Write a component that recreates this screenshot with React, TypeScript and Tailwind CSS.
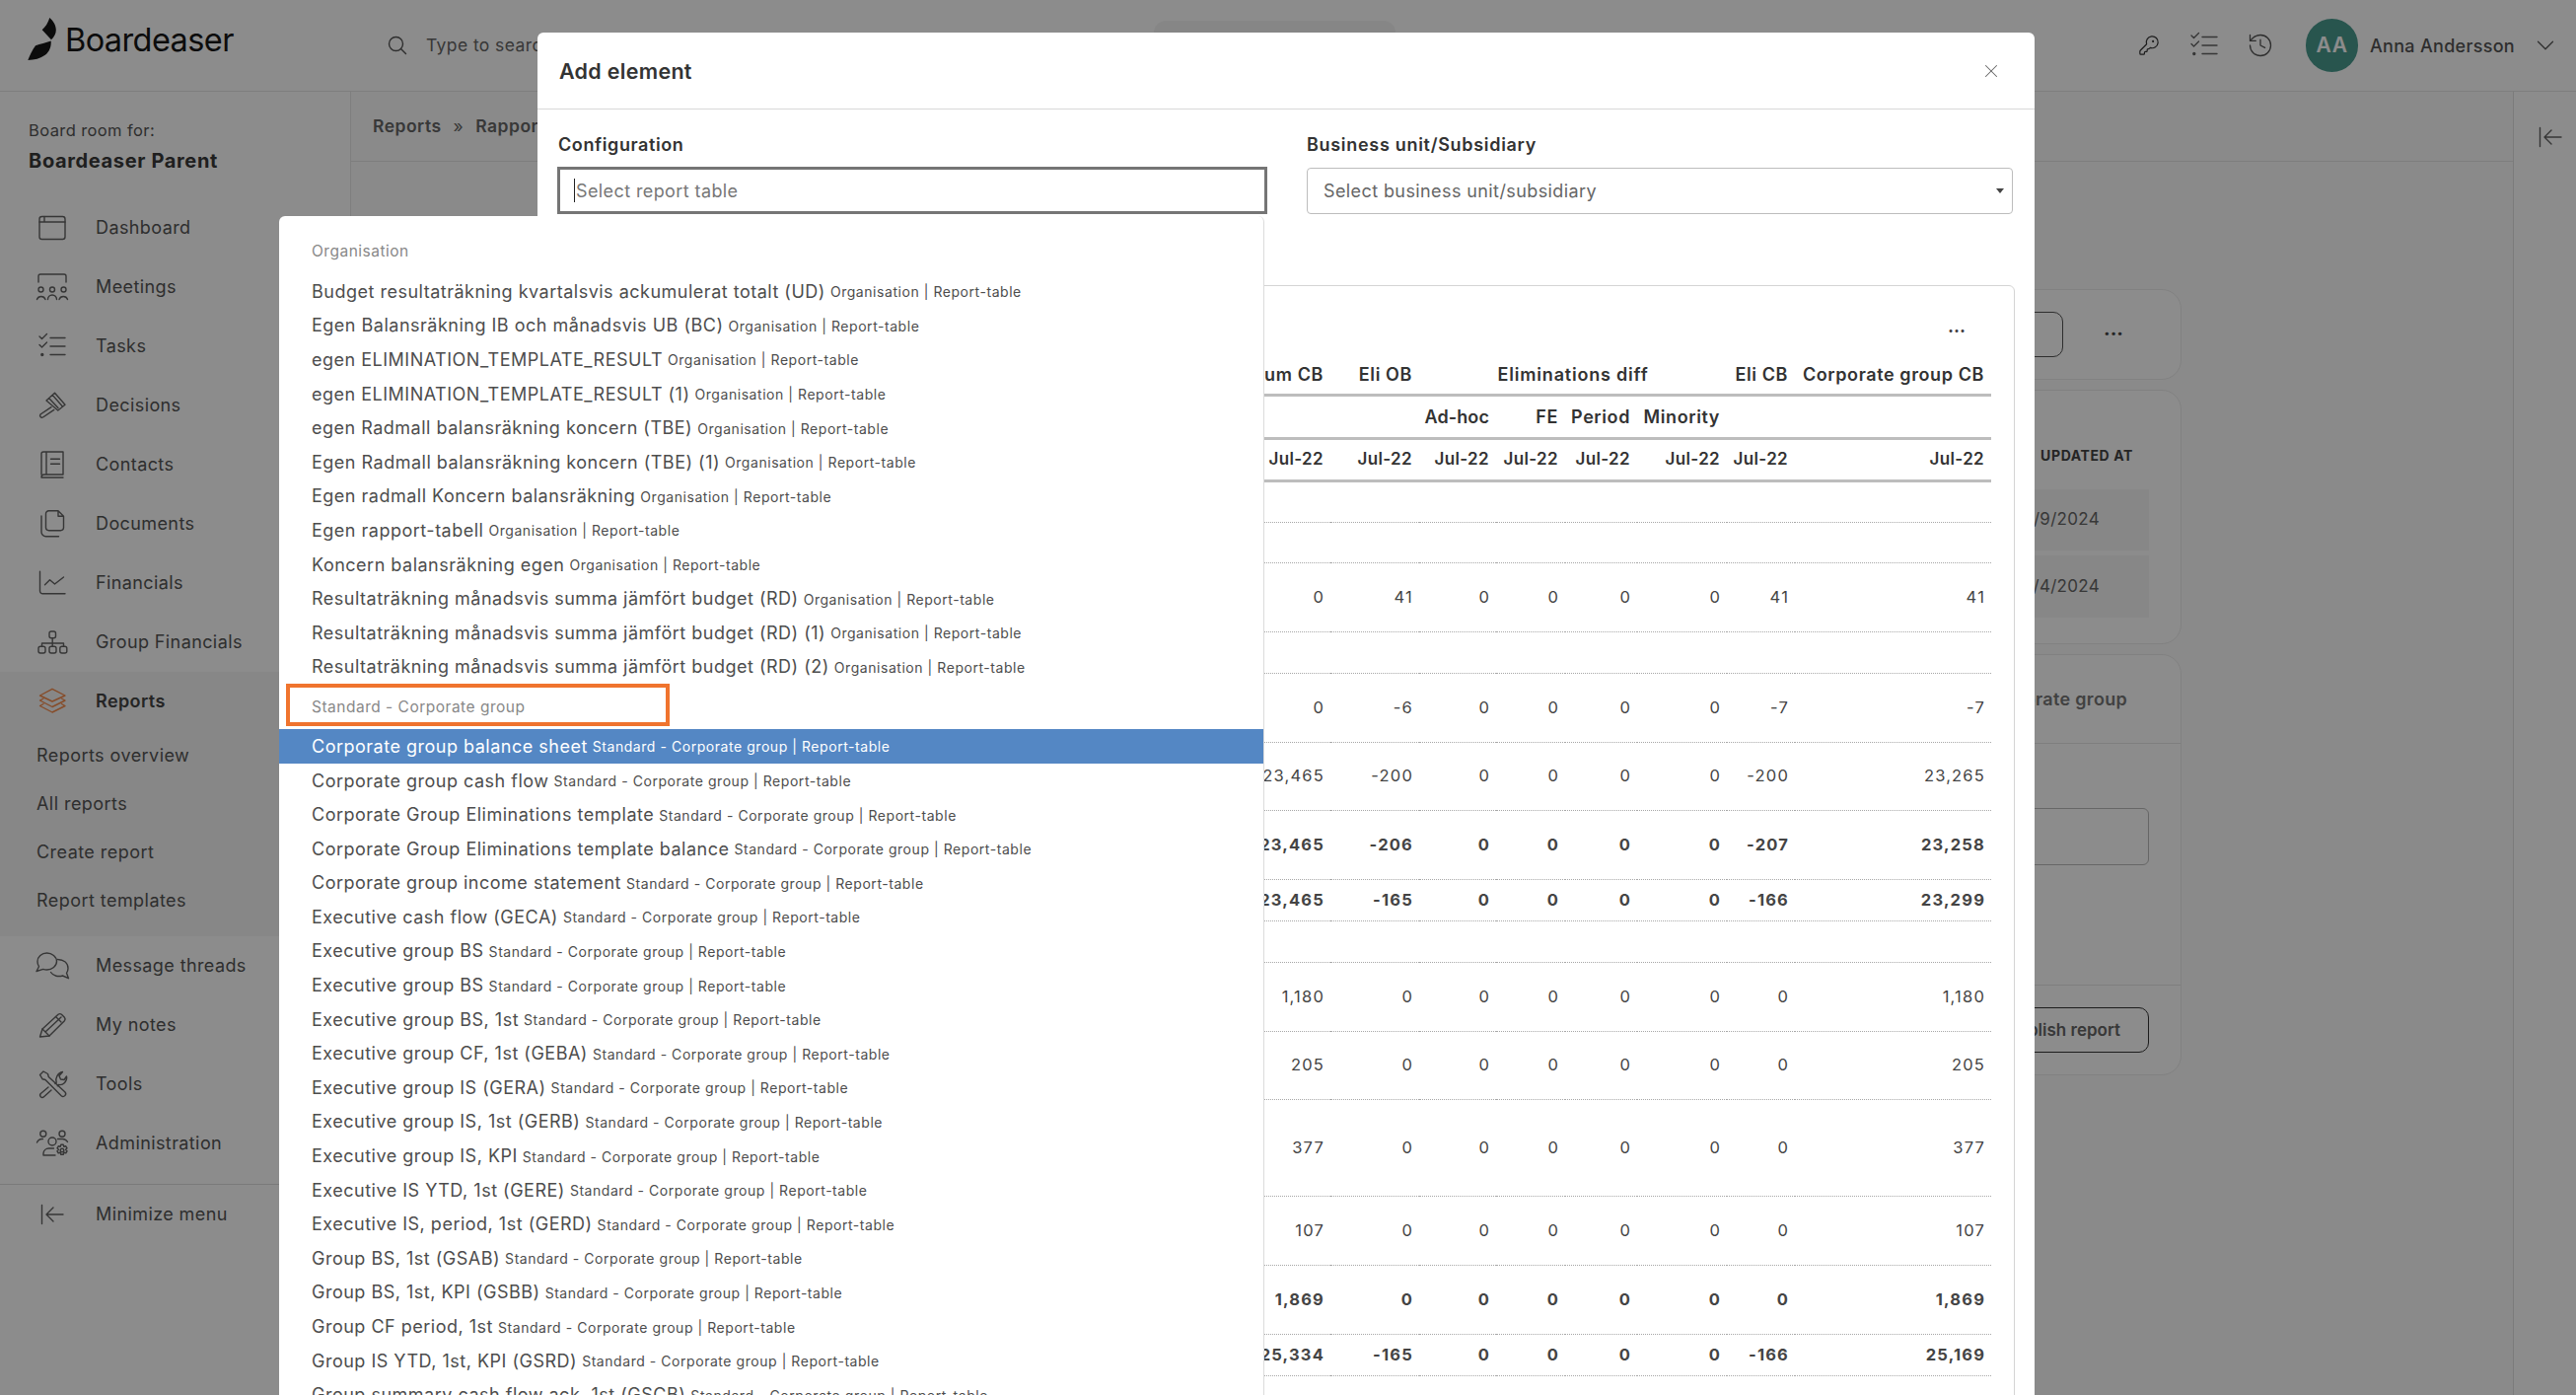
import { ChevronDown, History, KeyRound, X } from 'lucide-react';
import type { ReactNode } from 'react';

const INK = '#636363';

function Glyph({ children, color = INK }: { children: ReactNode; color?: string }) {
    return (
        <svg
            width="32"
            height="32"
            viewBox="0 0 32 32"
            fill="none"
            stroke={color}
            strokeWidth="1.4"
            strokeLinecap="round"
            strokeLinejoin="round"
            className="overflow-visible shrink-0"
        >
            {children}
        </svg>
    );
}

const icons: Record<string, ReactNode> = {
    dashboard: (
        <Glyph>
            <rect x="3" y="4.5" width="26" height="23" rx="2.5" />
            <path d="M3 10h26M8 4.5V10" />
        </Glyph>
    ),
    meetings: (
        <Glyph>
            <path d="M2 11V5a2 2 0 0 1 2-2h24a2 2 0 0 1 2 2v6" />
            <circle cx="4.5" cy="18.5" r="2.5" />
            <circle cx="16" cy="18.5" r="2.5" />
            <circle cx="27.5" cy="18.5" r="2.5" />
            <path d="M0.5 28.5a4.5 4.5 0 0 1 8.5 0M11.5 28.5a4.5 4.5 0 0 1 9 0M23 28.5a4.5 4.5 0 0 1 8.5 0" />
        </Glyph>
    ),
    tasks: (
        <Glyph>
            <path d="M3 6l2.5 2.5L10.5 3.5M3 14.5L5.5 17l5-5M14 7.5h15M14 16h15M14 24.5h15" />
            <circle cx="5.8" cy="24.5" r="1" fill={INK} />
        </Glyph>
    ),
    decisions: (
        <Glyph>
            <path d="M10 11l8.500-7.700L29 15.300 21.800 21zM12.600 8.600l9.400 10M16.200 5.400l10 11.400" />
            <path d="M15 17.700L4 25a2 2 0 0 0 2.500 3L17.800 20.400" />
        </Glyph>
    ),
    contacts: (
        <Glyph>
            <path d="M5 26V5a2 2 0 0 1 2-2h20v23H8a3 3 0 0 0-3 3h22M10 3v23M14.500 10.300h9M14.500 15.300h9" />
        </Glyph>
    ),
    documents: (
        <Glyph>
            <path d="M9.500 6a3 3 0 0 1 3-3.300H22l5.500 5.500V20a3 3 0 0 1-3 2.700h-12a3 3 0 0 1-3-2.700zM22 2.700V8.200h5.500" />
            <path d="M5 8v16a4.500 4.500 0 0 0 4.500 4.700h13" />
        </Glyph>
    ),
    financials: (
        <Glyph>
            <path d="M3.500 4.300V24a2.700 2.700 0 0 0 2.700 2.700H29M8.500 17.700l5-5 5 4.300 9-7" />
        </Glyph>
    ),
    group: (
        <Glyph>
            <rect x="13" y="5" width="6.500" height="6.700" rx="2" />
            <rect x="2" y="20.300" width="7" height="6.700" rx="2" />
            <rect x="13" y="20.300" width="7" height="6.700" rx="2" />
            <rect x="23.800" y="20.300" width="7" height="6.700" rx="2" />
            <path d="M16.200 11.700v8.600M5.500 20.300V17h22v3.300" />
        </Glyph>
    ),
    reports: (
        <Glyph color="#f58a4b">
            <path d="M16 3.300L29 10l-13 6-12.500-6z" />
            <path d="M7 13L3.500 15l12.500 6.500L29 15l-3.500-2" />
            <path d="M7 18.500l-3.500 2L16 27l13-6.500-3.500-2" />
        </Glyph>
    ),
    threads: (
        <Glyph>
            <path d="M0 21.500l2.500-4.800A8.500 8.500 0 0 1 1 11.500C1 6.800 5.300 3 10.500 3S20.500 6.800 20.500 11.500 15.800 20 10.500 20c-1.300 0-2.500-.2-3.700-.6z" />
            <path d="M21.500 9.500c5.500.2 10.500 2.800 10.500 9 0 2.200-.6 3.500-1.500 4.800l2 5.400-6-2.700c-4 1.200-9.500.5-12-3.500" />
        </Glyph>
    ),
    notes: (
        <Glyph>
            <path d="M3.500 28l2.500-8L22 5.300q1.800-1.400 3.400 0l3 3q1.400 1.700 0 3.400L13 27z" />
            <path d="M6 20l7 7M9.500 22.500L25 8M19.500 7.500l5.500 5.500" />
        </Glyph>
    ),
    tools: (
        <Glyph>
            <path d="M3.500 6.500L7 3l4.500 2.500.8 3L29 24a2.700 2.700 0 0 1-3.800 3.800L9 11.500l-3-.8z" />
            <path d="M12 19L4.300 25.500a2.300 2.300 0 0 0 3.200 3.300L15 22" />
            <path d="M19 15.500l1.200-1.300c-1.500-4.500 1.300-9.700 6.300-10.700l-3.500 4 1.500 3.500 3.500.5 2.500-3.500c1 5-3.500 9.500-8 8.500l-1.200 1.300" />
        </Glyph>
    ),
    admin: (
        <Glyph>
            <circle cx="6.800" cy="6.300" r="3" />
            <circle cx="26" cy="6.300" r="3" />
            <circle cx="16" cy="14" r="4" />
            <path d="M0.500 15a6 6 0 0 1 6-3.500M21.500 11.500h5a6 6 0 0 1 5 3M7 28v-2a5.500 5.500 0 0 1 5.500-5h5M7 28h12" />
            <circle cx="26" cy="23" r="1.800" />
            <path d="M24.800 17.300h2.400l.6 2 2-.5 1.200 2-1.400 1.500 1.400 1.500-1.200 2-2-.5-.6 2h-2.400l-.6-2-2 .5-1.200-2 1.400-1.500-1.400-1.500 1.200-2 2 .5z" />
        </Glyph>
    ),
    minimize: (
        <Glyph>
            <path d="M5.500 6.500v19M27 16H10M17 9l-7 7 7 7" />
        </Glyph>
    ),
};

function Logo() {
    return (
        <svg width="32" height="46" viewBox="25 14 32 46" fill="#161616" className="-mt-[5px] shrink-0">
            <path d="M49.300 16c3.700 3.200 6.400 7.400 6.500 12.300.1 3.600-1.800 7.300-4.800 10L41.700 28.300c3.300-3 6.200-7.300 7.600-12.300z" />
            <path d="M50.700 39.500c.4 5.400-1.300 10.800-5.900 14.300-4.800 3.600-11 5-17.500 5.200 2-5 4.300-10.200 7.700-14.700 4.600-1.800 10.500-3 15.700-4.800z" />
        </svg>
    );
}

function MenuRow({ icon, label, active }: { icon: string; label: string; active?: boolean }) {
    return (
        <div className="flex h-[60px] items-center pl-[36.500px]">
            {icons[icon]}
            <span className={`-mt-[1px] ml-[28.500px] text-[18px] tracking-[0.4px] ${active ? 'font-semibold text-[#444]' : 'text-[#555]'}`}>
                {label}
            </span>
        </div>
    );
}

function Sidebar() {
    return (
        <aside className="w-[356px] shrink-0 border-r border-[#e6e6e6] bg-white">
            <div className="h-[108px] pl-[29px] pt-[27px]">
                <div className="text-[16.500px] leading-[24px] tracking-[0.4px] text-[#555]">Board room for:</div>
                <div className="mt-[4px] text-[20px] leading-[30px] font-bold tracking-[0.65px] text-[#3a3a3a]">Boardeaser Parent</div>
            </div>
            <MenuRow icon="dashboard" label="Dashboard" />
            <MenuRow icon="meetings" label="Meetings" />
            <MenuRow icon="tasks" label="Tasks" />
            <MenuRow icon="decisions" label="Decisions" />
            <MenuRow icon="contacts" label="Contacts" />
            <MenuRow icon="documents" label="Documents" />
            <MenuRow icon="financials" label="Financials" />
            <MenuRow icon="group" label="Group Financials" />
            <div className="h-[268px] bg-[#f6f6f6]">
                <MenuRow icon="reports" label="Reports" active />
                {['Reports overview', 'All reports', 'Create report', 'Report templates'].map((t) => (
                    <div key={t} className="flex h-[49px] items-center pl-[37px] text-[18px] tracking-[0.45px] text-[#555]">
                        {t}
                    </div>
                ))}
            </div>
            <MenuRow icon="threads" label="Message threads" />
            <MenuRow icon="notes" label="My notes" />
            <MenuRow icon="tools" label="Tools" />
            <MenuRow icon="admin" label="Administration" />
            <div className="mt-[11px] border-t border-[#dedede]">
                <MenuRow icon="minimize" label="Minimize menu" />
            </div>
        </aside>
    );
}

function Header() {
    return (
        <header className="flex h-[93px] items-center border-b border-[#e6e6e6] bg-white pr-[16px]">
            <div className="-mt-[9px] flex w-[393px] shrink-0 items-center pl-[26px]">
                <Logo />
                <span className="ml-[8px] text-[32.500px] leading-none tracking-[-0.6px] text-[#161616]">Boardeaser</span>
            </div>
            <svg width="20" height="20" viewBox="0 0 20 20" fill="none" stroke="#555" strokeWidth="1.4" strokeLinecap="round" className="shrink-0">
                <circle cx="8.500" cy="8.500" r="7" />
                <path d="M13.500 13.500l5 5" />
            </svg>
            <span className="ml-[19px] w-[738px] shrink-0 text-[17.500px] tracking-[0.4px] text-[#666]">Type to search</span>
            <div className="h-[50px] w-[245px] shrink-0 rounded-xl bg-[#f4f4f4]" />
            <div className="flex-1" />
            <KeyRound size={22} strokeWidth={1.3} color="#333" />
            <div className="ml-[29px]">{icons.tasks}</div>
            <History size={28} strokeWidth={1.1} color="#555" className="ml-[27px]" />
            <div className="ml-[32px] flex h-[54px] w-[53px] items-center justify-center rounded-full bg-[#4a9b8f] text-[21px] font-semibold tracking-[0.5px] text-[#fff]">
                AA
            </div>
            <span className="ml-[12px] w-[146px] text-[18px] font-medium whitespace-nowrap tracking-[0.3px] text-[#555]">Anna Andersson</span>
            <ChevronDown size={30} strokeWidth={1} color="#555" className="ml-[17px]" />
        </header>
    );
}

function PageBehind() {
    return (
        <main className="min-w-0 flex-1 bg-[#fbfbfb]">
            <div className="flex h-[71px] items-center border-b border-[#e6e6e6] pl-[22px] text-[17.500px] font-semibold tracking-[0.5px] text-[#666]">
                Reports<span className="mx-[12px] font-normal">»</span>Rapport
            </div>
            <div className="ml-auto mr-[336px] flex w-[760px] flex-col gap-[10px] pt-[129px]">
                <section className="flex h-[92px] items-center justify-end rounded-[20px] border border-[#ececec] bg-white">
                    <div className="flex h-[46px] items-center rounded-[10px] border border-[#555] px-[28px] text-[17px] font-semibold text-[#666]">
                        Add section
                    </div>
                    <div className="mb-[2px] mr-[17px] flex w-[102px] justify-center text-[20px] leading-none font-bold text-[#444]">···</div>
                </section>
                <section className="h-[258px] rounded-[20px] border border-[#ececec] bg-white pr-[32px]">
                    <div className="flex h-[100px] items-end justify-end pb-[24px] pr-[16px] text-[14px] font-bold tracking-[0.6px] text-[#444]">
                        UPDATED AT
                    </div>
                    <div className="flex h-[62px] items-center justify-end bg-[#f6f6f6] pr-[50px] text-[17px] tracking-[0.3px] text-[#666]">10/9/2024</div>
                    <div className="mt-[5px] flex h-[63px] items-center justify-end bg-[#f6f6f6] pr-[50px] text-[17px] tracking-[0.3px] text-[#666]">10/4/2024</div>
                </section>
                <section className="h-[427px] rounded-[20px] border border-[#ececec] bg-white">
                    <div className="flex h-[90px] items-center justify-end border-b border-[#e6e6e6] pr-[54px] text-[18px] font-semibold tracking-[0.3px] text-[#777]">
                        Corporate group
                    </div>
                    <div className="h-[245px] border-b border-[#e6e6e6] pr-[32px] pt-[65px]">
                        <div className="h-[58px] rounded-md border border-[#bbb]" />
                    </div>
                    <div className="flex justify-end pr-[32px] pt-[22px]">
                        <div className="flex h-[46px] w-[300px] items-center justify-end rounded-[10px] border border-[#333] pr-[28px] pt-[2px] text-[17px] font-semibold text-[#666]">
                            Publish report
                        </div>
                    </div>
                </section>
            </div>
        </main>
    );
}

type Row = { h: string; bold?: boolean; cells?: string[] };

const zeroes = (a: string, b: string, c: string, d: string) => [a, b, '0', '0', '0', '0', c, d];

const rows: Row[] = [
    { h: 'h-[42px]' },
    { h: 'h-[41px]' },
    { h: 'h-[70px]', cells: zeroes('0', '41', '41', '41') },
    { h: 'h-[42px]' },
    { h: 'h-[70px]', cells: zeroes('0', '-6', '-7', '-7') },
    { h: 'h-[69px]', cells: zeroes('23,465', '-200', '-200', '23,265') },
    { h: 'h-[70px]', bold: true, cells: zeroes('23,465', '-206', '-207', '23,258') },
    { h: 'h-[42px]', bold: true, cells: zeroes('23,465', '-165', '-166', '23,299') },
    { h: 'h-[42px]' },
    { h: 'h-[70px]', cells: zeroes('1,180', '0', '0', '1,180') },
    { h: 'h-[69px]', cells: zeroes('205', '0', '0', '205') },
    { h: 'h-[98px]', cells: zeroes('377', '0', '0', '377') },
    { h: 'h-[70px]', cells: zeroes('107', '0', '0', '107') },
    { h: 'h-[70px]', bold: true, cells: zeroes('1,869', '0', '0', '1,869') },
    { h: 'h-[42px]', bold: true, cells: zeroes('25,334', '-165', '-166', '25,169') },
    { h: 'h-[42px]' },
];

function ReportTable() {
    const th = 'pr-[7px] text-right text-[18px] font-semibold tracking-[0.6px] whitespace-nowrap text-[#333]';
    const date = 'pr-[7px] text-right text-[17px] font-semibold tracking-[0.35px] whitespace-nowrap text-[#333]';
    return (
        <table className="w-[1434px] table-fixed border-collapse">
            <colgroup>
                <col className="w-[764px]" />
                <col className="w-[90px]" />
                <col className="w-[78px]" />
                <col className="w-[70px]" />
                <col className="w-[73px]" />
                <col className="w-[91px]" />
                <col className="w-[69px]" />
                <col className="w-[199px]" />
            </colgroup>
            <thead>
                <tr className="h-[39px] border-b-[3px] border-[#bdbdbd]">
                    <th className={th}>Sum CB</th>
                    <th className={th}>Eli OB</th>
                    <th colSpan={4} className="text-center text-[18px] font-semibold tracking-[0.8px] text-[#333]">Eliminations diff</th>
                    <th className={th}>Eli CB</th>
                    <th className={th}>Corporate group CB</th>
                </tr>
                <tr className="h-[44px] border-b-[3px] border-[#bdbdbd]">
                    <th />
                    <th />
                    <th className="pr-[7px] text-right text-[18px] font-semibold tracking-[0.1px] whitespace-nowrap text-[#333]">Ad-hoc</th>
                    <th className={th}>FE</th>
                    <th className={th}>Period</th>
                    <th className={th}>Minority</th>
                    <th />
                    <th />
                </tr>
                <tr className="h-[43px] border-b-[3px] border-[#bdbdbd]">
                    {Array.from({ length: 8 }).map((_, i) => (
                        <th key={i} className={date}>Jul-22</th>
                    ))}
                </tr>
            </thead>
            <tbody>
                {rows.map((row, i) => (
                    <tr key={i} className={`${row.h} border-b border-dotted border-[#a8a8a8]`}>
                        {(row.cells ?? Array.from({ length: 8 }).map(() => '')).map((c, j) => (
                            <td
                                key={j}
                                className={`pr-[6px] text-right text-[16.500px] tracking-[1.2px] text-[#444] ${row.bold ? 'font-bold' : ''}`}
                            >
                                {c}
                            </td>
                        ))}
                    </tr>
                ))}
            </tbody>
        </table>
    );
}

function AddElementModal() {
    return (
        <div className="absolute left-[545px] top-[33px] h-[1381px] w-[1518px] overflow-hidden rounded-t-md bg-white">
            <div className="flex h-[78px] items-center justify-between border-b border-[#d8d8d8] pl-[22px] pr-[33px]">
                <h2 className="mt-[2px] text-[21.500px] font-semibold tracking-[0.3px] text-[#333]">Add element</h2>
                <X size={22} strokeWidth={1.1} color="#666" />
            </div>
            <div className="flex gap-[40px] px-[20px] pt-[21px]">
                <div className="w-[720px]">
                    <label className="block h-[37px] pl-[1px] text-[18px] leading-[30px] font-semibold tracking-[0.6px] text-[#333]">Configuration</label>
                    <div className="flex h-[48px] items-center border-[3px] border-[#757575] pl-[15px] text-[18px] tracking-[0.4px] text-[#777]">
                        <span className="-ml-px mr-px h-[24px] w-px bg-[#222]" />
                        Select report table
                    </div>
                </div>
                <div className="w-[716px]">
                    <label className="block h-[37px] text-[18px] leading-[30px] font-semibold tracking-[0.7px] text-[#333]">Business unit/Subsidiary</label>
                    <div className="mt-[1px] flex h-[47px] items-center justify-between rounded-[4px] border border-[#bdbdbd] pl-[16px] pr-[8px] text-[18px] tracking-[0.4px] text-[#666]">
                        Select business unit/subsidiary
                        <span className="h-0 w-0 border-x-[4px] border-t-[5px] border-x-transparent border-t-[#444]" />
                    </div>
                </div>
            </div>
            <div className="mx-[20px] mt-[72px] h-[1200px] rounded-t-md border border-[#d4d4d4] pl-[19px] pr-[21px]">
                <div className="flex h-[71px] justify-end pr-[28px] pt-[37px] text-[18px] leading-none font-bold text-[#444]">···</div>
                <ReportTable />
            </div>
        </div>
    );
}

const ORG = 'Organisation | Report-table';
const STD = 'Standard - Corporate group | Report-table';

const orgItems = [
    'Budget resultaträkning kvartalsvis ackumulerat totalt (UD)',
    'Egen Balansräkning IB och månadsvis UB (BC)',
    'egen ELIMINATION_TEMPLATE_RESULT',
    'egen ELIMINATION_TEMPLATE_RESULT (1)',
    'egen Radmall balansräkning koncern (TBE)',
    'Egen Radmall balansräkning koncern (TBE) (1)',
    'Egen radmall Koncern balansräkning',
    'Egen rapport-tabell',
    'Koncern balansräkning egen',
    'Resultaträkning månadsvis summa jämfört budget (RD)',
    'Resultaträkning månadsvis summa jämfört budget (RD) (1)',
    'Resultaträkning månadsvis summa jämfört budget (RD) (2)',
];

const stdItems = [
    'Corporate group balance sheet',
    'Corporate group cash flow',
    'Corporate Group Eliminations template',
    'Corporate Group Eliminations template balance',
    'Corporate group income statement',
    'Executive cash flow (GECA)',
    'Executive group BS',
    'Executive group BS',
    'Executive group BS, 1st',
    'Executive group CF, 1st (GEBA)',
    'Executive group IS (GERA)',
    'Executive group IS, 1st (GERB)',
    'Executive group IS, KPI',
    'Executive IS YTD, 1st (GERE)',
    'Executive IS, period, 1st (GERD)',
    'Group BS, 1st (GSAB)',
    'Group BS, 1st, KPI (GSBB)',
    'Group CF period, 1st',
    'Group IS YTD, 1st, KPI (GSRD)',
    'Group summary cash flow ack, 1st (GSCB)',
];

function Option({ name, meta, selected }: { name: string; meta: string; selected?: boolean }) {
    return (
        <div className={`flex h-[34.600px] items-center pl-[33px] whitespace-nowrap ${selected ? 'bg-[#5487c4] text-white' : 'text-[#4d4d4d]'}`}>
            <span className="text-[18px] tracking-[0.5px]">{name}</span>
            <span className="ml-[5px] mt-[1px] text-[14px] tracking-[0.55px]">{meta}</span>
        </div>
    );
}

function ReportDropdown() {
    return (
        <div className="absolute bottom-0 left-[283px] top-[219px] w-[999px] overflow-hidden rounded-t-md border-r border-[#dcdcdc] bg-white pt-[12px]">
            <div className="flex h-[47px] items-center pl-[33px] text-[15.500px] tracking-[0.5px] text-[#888]">Organisation</div>
            {orgItems.map((name) => (
                <Option key={name} name={name} meta={ORG} />
            ))}
            <div className="flex h-[46px] items-center pl-[33px] text-[15.500px] tracking-[0.5px] text-[#888]">Standard - Corporate group</div>
            {stdItems.map((name, i) => (
                <Option key={`${name}-${i}`} name={name} meta={STD} selected={i === 0} />
            ))}
        </div>
    );
}

export default function App() {
    return (
        <div className="relative flex h-[1414px] w-[2612px] flex-col overflow-hidden bg-white font-['Inter',sans-serif]">
            <Header />
            <div className="flex min-h-0 flex-1">
                <Sidebar />
                <PageBehind />
                <div className="w-[64px] shrink-0 border-l border-[#e0e0e0] bg-white pl-[21px] pt-[30px]">{icons.minimize}</div>
            </div>

            <div className="absolute inset-0 bg-black/45" />
            <AddElementModal />
            <ReportDropdown />
            <div className="absolute left-[290px] top-[693px] h-[43px] w-[389px] border-[4px] border-[#f0742e]" />
        </div>
    );
}
